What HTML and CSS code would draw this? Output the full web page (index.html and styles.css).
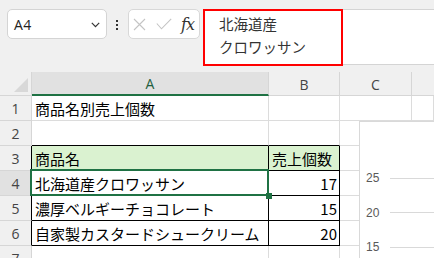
FILE: index.html
```html
<!DOCTYPE html>
<html lang="ja">
<head>
<meta charset="utf-8">
<link rel="stylesheet" href="styles.css">
</head>
<body>
<div class="topbar">
  <div class="namebox">
    <span class="ref">A4</span>
    <svg class="chev" width="9" height="6" viewBox="0 0 9 6"><path d="M0.8 0.8 L4.5 4.6 L8.2 0.8" fill="none" stroke="#333" stroke-width="1.2"/></svg>
  </div>
  <div class="dots"><i></i><i></i><i></i></div>
  <div class="fxbox">
    <svg class="ico" width="13" height="13" viewBox="0 0 13 13"><path d="M1 1 L12 12 M12 1 L1 12" stroke="#c4c4c4" stroke-width="1.1" fill="none"/></svg>
    <svg class="ico" width="16" height="12" viewBox="0 0 16 12"><path d="M0.8 5.5 L5.5 10.8 L15.2 0.8" stroke="#c4c4c4" stroke-width="1.1" fill="none"/></svg>
    <span class="fx">fx</span>
  </div>
  <div class="formula">
    <div class="ftext">北海道産<br>クロワッサン</div>
    <div class="hl"></div>
  </div>
</div>
<div class="sheet">
  <div class="grid">
    <div class="h corner"><svg width="31" height="23" viewBox="0 0 31 23"><polygon points="28,6 28,20 14,20" fill="#d8d8d8"/></svg></div>
    <div class="h col sel-col">A</div>
    <div class="h col">B</div>
    <div class="h col">C</div>
    <div class="h col last"></div>

    <div class="h rn">1</div>
    <div class="c">商品名別売上個数</div>
    <div class="c"></div>
    <div class="c"></div>
    <div class="c"></div>

    <div class="h rn">2</div>
    <div class="c bb"></div>
    <div class="c bb"></div>
    <div class="c"></div>
    <div class="c"></div>

    <div class="h rn br">3</div>
    <div class="c tb head">商品名</div>
    <div class="c tb head">売上個数</div>
    <div class="c"></div>
    <div class="c"></div>

    <div class="h rn br sel-row">4</div>
    <div class="c tb">北海道産クロワッサン</div>
    <div class="c tb num">17</div>
    <div class="c"></div>
    <div class="c"></div>

    <div class="h rn br">5</div>
    <div class="c tb">濃厚ベルギーチョコレート</div>
    <div class="c tb num">15</div>
    <div class="c"></div>
    <div class="c"></div>

    <div class="h rn br">6</div>
    <div class="c tb">自家製カスタードシュークリーム</div>
    <div class="c tb num">20</div>
    <div class="c"></div>
    <div class="c"></div>

    <div class="h rn">7</div>
    <div class="c"></div>
    <div class="c"></div>
    <div class="c"></div>
    <div class="c"></div>
  </div>
  <div class="selection"><span class="handle"></span></div>
  <div class="chart">
    <div class="axis"><span class="lbl">25</span><span class="gl"></span></div>
    <div class="axis"><span class="lbl">20</span><span class="gl"></span></div>
    <div class="axis"><span class="lbl">15</span><span class="gl"></span></div>
  </div>
</div>
</body>
</html>
```
FILE: styles.css
```css
* { box-sizing: border-box; }
html, body {
  margin: 0;
  padding: 0;
  width: 434px;
  height: 258px;
  overflow: hidden;
  background: #f0f0f0;
}
body {
  font-family: "Noto Sans CJK JP", "Noto Sans", sans-serif;
}
.topbar {
  height: 72px;
  display: flex;
  align-items: flex-start;
  padding: 9px 0 0 7px;
}
.namebox {
  width: 100px;
  height: 30px;
  background: #fff;
  border: 1px solid #d4d4d4;
  border-radius: 5px;
  display: flex;
  align-items: center;
  justify-content: space-between;
  padding: 0 6px 0 6px;
}
.ref {
  font-family: "Open Sans", "Noto Sans", sans-serif;
  font-size: 14px;
  color: #222;
  letter-spacing: 0.3px;
}
.chev { margin-top: 1px; }
.dots {
  margin-left: 9px;
  margin-top: 11px;
  display: flex;
  flex-direction: column;
  gap: 2px;
}
.dots i {
  display: block;
  width: 2px;
  height: 2px;
  background: #333;
}
.fxbox {
  margin-left: 10px;
  width: 72px;
  height: 30px;
  background: #fff;
  border: 1px solid #d8d8d8;
  border-radius: 5px;
  display: flex;
  align-items: center;
  padding-left: 4px;
  gap: 10px;
}
.fx {
  font-family: "DejaVu Serif", "Liberation Serif", serif;
  font-style: italic;
  font-size: 16px;
  color: #333;
  margin-left: -1px;
  letter-spacing: -1px;
}
.formula {
  position: relative;
  margin-left: 3px;
  flex: 1;
  height: 56px;
  background: #fff;
  border-top: 1px solid #d4d4d4;
  border-bottom: 1px solid #d4d4d4;
}
.ftext {
  padding: 2px 0 0 16px;
  font-size: 14.5px;
  line-height: 23px;
  color: #333;
}
.hl {
  position: absolute;
  left: 0;
  top: -1px;
  width: 140px;
  height: 57px;
  border: 2px solid #ff0000;
}
.sheet {
  position: relative;
  background: #fff;
  height: 186px;
}
.grid {
  display: grid;
  grid-template-columns: 32px 237px 71px 72px 1fr;
  grid-template-rows: 24px repeat(7, 25px);
}
.h {
  background: #f0f0f0;
  border-right: 1px solid #d6d6d6;
  border-bottom: 1px solid #d6d6d6;
  font-family: "Open Sans", "Noto Sans", sans-serif;
  font-size: 14px;
  color: #444;
  display: flex;
  align-items: center;
  justify-content: center;
}
.corner { align-items: flex-end; justify-content: flex-start; }
.col { padding-top: 1px; }
.col.last { border-right: none; }
.sel-col {
  background: #e1e1e1;
  border-bottom: 2px solid #1f7244;
  color: #1f6040;
}
.rn { background: #f0f0f0; padding-top: 1px; }
.sel-row { background: #e1e1e1; }
.br { border-right-color: #000; }
.c {
  border-right: 1px solid #dcdcdc;
  border-bottom: 1px solid #dcdcdc;
  font-size: 15px;
  color: #000;
  display: flex;
  align-items: center;
  padding: 0 3px 0 3px;
  white-space: nowrap;
}
.bb { border-bottom-color: #000; }
.tb { border-right-color: #000; border-bottom-color: #000; }
.head { background: #daf2d0; }
.num { justify-content: flex-end; padding-right: 2px; }
.selection {
  position: absolute;
  left: 30px;
  top: 97px;
  width: 239px;
  height: 27px;
  border: 2px solid #1f7244;
}
.handle {
  position: absolute;
  right: -5px;
  bottom: -5px;
  width: 6px;
  height: 6px;
  background: #1f7244;
}
.chart {
  position: absolute;
  left: 359px;
  top: 49px;
  right: 0;
  bottom: 0;
  background: #fff;
  border-left: 1px solid #d9d9d9;
  border-top: 1px solid #d9d9d9;
  padding-top: 39px;
  display: flex;
  flex-direction: column;
}
.axis {
  height: 34.5px;
  display: flex;
  align-items: center;
  flex-shrink: 0;
}
.lbl {
  width: 30px;
  padding-left: 6px;
  font-family: "Liberation Sans", Arial, sans-serif;
  font-size: 12px;
  color: #595959;
}
.gl {
  flex: 1;
  height: 1px;
  background: #d9d9d9;
}
```
